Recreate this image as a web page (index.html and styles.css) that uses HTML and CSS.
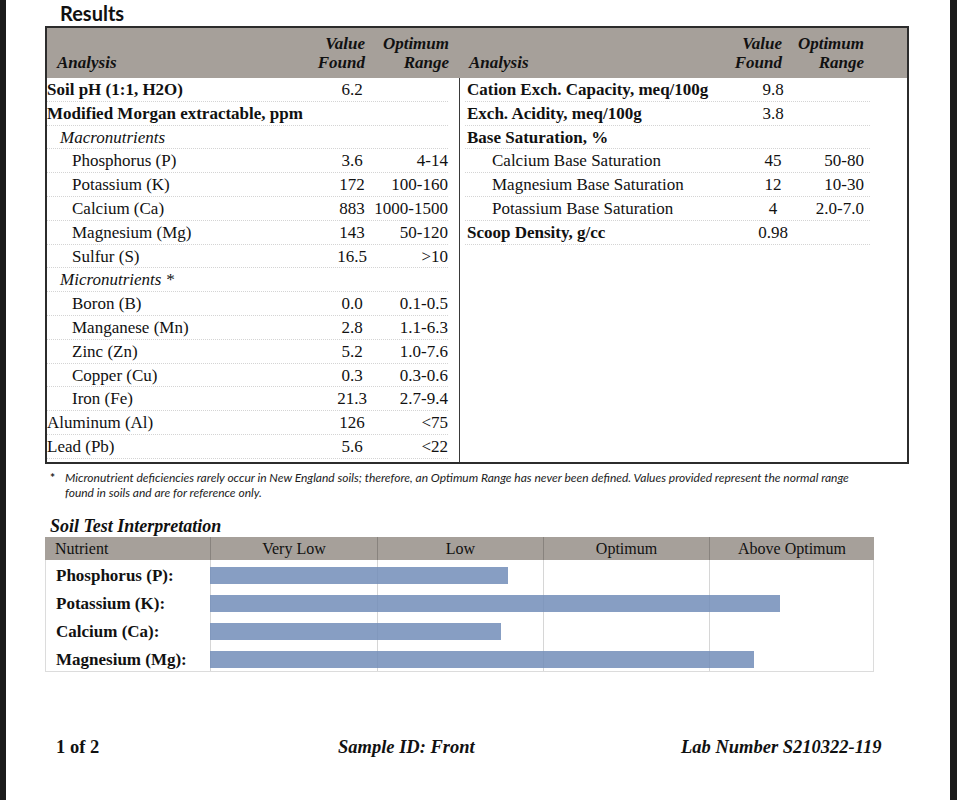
FILE: index.html
```html
<!DOCTYPE html>
<html lang="en">
<head>
<meta charset="utf-8">
<title>Results</title>
<link rel="stylesheet" href="styles.css">
</head>
<body>
<div class="page">
  <h1 class="title">Results</h1>

  <section class="results">
    <div class="half half-left">
      <div class="head">
        <span class="c-name">Analysis</span>
        <span class="c-val">Value<br>Found</span>
        <span class="c-rng">Optimum<br>Range</span>
      </div>
      <div class="body">
        <div class="row"><span class="c-name strong">Soil pH (1:1, H2O)</span><span class="c-val">6.2</span><span class="c-rng"></span></div>
        <div class="row"><span class="c-name strong">Modified Morgan extractable, ppm</span><span class="c-val"></span><span class="c-rng"></span></div>
        <div class="row"><span class="c-name group">Macronutrients</span><span class="c-val"></span><span class="c-rng"></span></div>
        <div class="row"><span class="c-name sub">Phosphorus (P)</span><span class="c-val">3.6</span><span class="c-rng">4-14</span></div>
        <div class="row"><span class="c-name sub">Potassium (K)</span><span class="c-val">172</span><span class="c-rng">100-160</span></div>
        <div class="row"><span class="c-name sub">Calcium (Ca)</span><span class="c-val">883</span><span class="c-rng">1000-1500</span></div>
        <div class="row"><span class="c-name sub">Magnesium (Mg)</span><span class="c-val">143</span><span class="c-rng">50-120</span></div>
        <div class="row"><span class="c-name sub">Sulfur (S)</span><span class="c-val">16.5</span><span class="c-rng">&gt;10</span></div>
        <div class="row"><span class="c-name group">Micronutrients *</span><span class="c-val"></span><span class="c-rng"></span></div>
        <div class="row"><span class="c-name sub">Boron (B)</span><span class="c-val">0.0</span><span class="c-rng">0.1-0.5</span></div>
        <div class="row"><span class="c-name sub">Manganese (Mn)</span><span class="c-val">2.8</span><span class="c-rng">1.1-6.3</span></div>
        <div class="row"><span class="c-name sub">Zinc (Zn)</span><span class="c-val">5.2</span><span class="c-rng">1.0-7.6</span></div>
        <div class="row"><span class="c-name sub">Copper (Cu)</span><span class="c-val">0.3</span><span class="c-rng">0.3-0.6</span></div>
        <div class="row"><span class="c-name sub">Iron (Fe)</span><span class="c-val">21.3</span><span class="c-rng">2.7-9.4</span></div>
        <div class="row"><span class="c-name">Aluminum (Al)</span><span class="c-val">126</span><span class="c-rng">&lt;75</span></div>
        <div class="row"><span class="c-name">Lead (Pb)</span><span class="c-val">5.6</span><span class="c-rng">&lt;22</span></div>
      </div>
    </div>

    <div class="half half-right">
      <div class="head">
        <span class="c-name">Analysis</span>
        <span class="c-val">Value<br>Found</span>
        <span class="c-rng">Optimum<br>Range</span>
      </div>
      <div class="body">
        <div class="row"><span class="c-name strong">Cation Exch. Capacity, meq/100g</span><span class="c-val">9.8</span><span class="c-rng"></span></div>
        <div class="row"><span class="c-name strong">Exch. Acidity, meq/100g</span><span class="c-val">3.8</span><span class="c-rng"></span></div>
        <div class="row"><span class="c-name strong">Base Saturation, %</span><span class="c-val"></span><span class="c-rng"></span></div>
        <div class="row"><span class="c-name sub">Calcium Base Saturation</span><span class="c-val">45</span><span class="c-rng">50-80</span></div>
        <div class="row"><span class="c-name sub">Magnesium Base Saturation</span><span class="c-val">12</span><span class="c-rng">10-30</span></div>
        <div class="row"><span class="c-name sub">Potassium Base Saturation</span><span class="c-val">4</span><span class="c-rng">2.0-7.0</span></div>
        <div class="row"><span class="c-name strong">Scoop Density, g/cc</span><span class="c-val">0.98</span><span class="c-rng"></span></div>
      </div>
    </div>
  </section>

  <div class="footnote">
    <span class="star">*</span>
    <p class="note">Micronutrient deficiencies rarely occur in New England soils; therefore, an Optimum Range has never been defined. Values provided represent the normal range<br>found in soils and are for reference only.</p>
  </div>

  <h2 class="interp-title">Soil Test Interpretation</h2>
  <section class="interp">
    <div class="interp-head">
      <span class="ih-first">Nutrient</span>
      <span>Very Low</span>
      <span>Low</span>
      <span>Optimum</span>
      <span>Above Optimum</span>
    </div>
    <div class="interp-body">
      <span class="nutrient">Phosphorus (P):</span>
      <div class="track"><div class="bar" style="width:44.9%"></div></div>
      <span class="nutrient">Potassium (K):</span>
      <div class="track"><div class="bar" style="width:86%"></div></div>
      <span class="nutrient">Calcium (Ca):</span>
      <div class="track"><div class="bar" style="width:43.9%"></div></div>
      <span class="nutrient">Magnesium (Mg):</span>
      <div class="track"><div class="bar" style="width:82.1%"></div></div>
    </div>
  </section>

  <footer class="footer">
    <span class="pg">1 of 2</span>
    <span class="it">Sample ID: Front</span>
    <span class="it">Lab Number S210322-119</span>
  </footer>
</div>
</body>
</html>
```

FILE: styles.css
```css
html, body {
  margin: 0;
  padding: 0;
  background: #1a1a1a;
}

.page {
  width: 957px;
  height: 800px;
  box-sizing: border-box;
  border-left: 6px solid #1b1b1b;
  border-right: 7px solid #1b1b1b;
  background: #ffffff;
  overflow: hidden;
  font-family: "Liberation Serif", "Times New Roman", serif;
  color: #111;
}

.title {
  margin: 0;
  height: 26px;
  padding-left: 54px;
  font-family: Lato, "Liberation Sans", sans-serif;
  font-weight: 700;
  font-size: 20px;
  line-height: 26px;
  color: #111;
}

/* ---------- results table ---------- */
.results {
  display: flex;
  width: 864px;
  margin-left: 39px;
  box-sizing: border-box;
  border: 2px solid #2c2c2c;
  font-size: 17px;
}

.half {
  display: flex;
  flex-direction: column;
}

.half-left {
  width: 413px;
  flex: none;
}

.half-right {
  flex: 1;
}

.head {
  height: 50px;
  background: #a6a09a;
  display: grid;
  align-items: end;
  padding-bottom: 6px;
  box-sizing: border-box;
  font-weight: 700;
  font-style: italic;
  line-height: 19px;
  white-space: nowrap;
}

.head .c-val,
.head .c-rng {
  text-align: right;
}

.body {
  flex: 1;
  padding-bottom: 3px;
}

.half-left .body {
  border-right: 1px solid #3a3a3a;
}

.row {
  display: grid;
  height: 23.8px;
  line-height: 23.8px;
  border-bottom: 1px dotted #d4d4d4;
  box-sizing: border-box;
  white-space: nowrap;
}

.c-val {
  text-align: center;
}

.c-rng {
  text-align: right;
}

/* left half columns */
.half-left .row {
  grid-template-columns: 283px 44px 1fr;
  margin-right: 11px;
}

.half-left .head {
  grid-template-columns: 263px 64px 1fr;
  padding-right: 11px;
}

.half-left .head .c-name {
  padding-left: 10px;
}

.half-left .head .c-val {
  padding-right: 9px;
}

/* right half columns */
.half-right .row {
  grid-template-columns: 286px 44px 1fr;
  margin-left: 5px;
  margin-right: 37px;
}

.half-right .head {
  grid-template-columns: 266px 64px 1fr;
  padding-left: 5px;
  padding-right: 37px;
}

.half-right .head .c-name {
  padding-left: 4px;
}

.half-right .head .c-val {
  padding-right: 13px;
}

.half-right .c-rng {
  padding-right: 6px;
}

.half-right .row .c-name {
  padding-left: 2px;
}

.strong {
  font-weight: 700;
}

.group {
  font-style: italic;
  padding-left: 13px;
}

.half-left .sub {
  padding-left: 25px;
}

.half-right .row .sub {
  padding-left: 27px;
}

/* ---------- footnote ---------- */
.footnote {
  display: grid;
  grid-template-columns: 15px auto;
  margin: 6px 0 0 44px;
  font-family: Lato, "Liberation Sans", sans-serif;
  font-style: italic;
  font-size: 12px;
  line-height: 15px;
  color: #222;
}

.star {
  font-style: normal;
  font-weight: 700;
}

.note {
  margin: 0;
  white-space: nowrap;
}

/* ---------- interpretation ---------- */
.interp-title {
  margin: 16px 0 1px 44px;
  font-size: 18px;
  line-height: 20px;
  font-weight: 700;
  font-style: italic;
}

.interp {
  width: 829px;
  margin-left: 39px;
}

.interp-head {
  display: grid;
  grid-template-columns: 165px 167px 166px 166px 165px;
  height: 23px;
  background: #a6a09a;
  font-size: 16px;
  line-height: 23px;
  text-align: center;
}

.interp-head span + span {
  border-left: 1px solid rgba(0, 0, 0, 0.18);
}

.interp-head .ih-first {
  text-align: left;
  padding-left: 10px;
}

.interp-body {
  display: grid;
  grid-template-columns: 164px 1fr;
  row-gap: 11px;
  align-items: center;
  padding: 7px 0 3px;
  border: 1px solid #dcdcdc;
  border-top: none;
  background-image:
    linear-gradient(#d6d6d6, #d6d6d6),
    linear-gradient(#d6d6d6, #d6d6d6),
    linear-gradient(#d6d6d6, #d6d6d6),
    linear-gradient(#d6d6d6, #d6d6d6);
  background-size: 1px 100%;
  background-repeat: no-repeat;
  background-position: 164px 0, 331px 0, 497px 0, 663px 0;
}

.nutrient {
  padding-left: 10px;
  font-weight: 700;
  font-size: 17px;
  line-height: 17px;
  white-space: nowrap;
}

.track {
  height: 17px;
}

.bar {
  height: 17px;
  background: rgba(112, 140, 184, 0.84);
}

/* ---------- footer ---------- */
.footer {
  display: grid;
  grid-template-columns: 282px 343px auto;
  margin-top: 63px;
  padding-left: 50px;
  font-size: 18.5px;
  line-height: 24px;
  font-weight: 700;
}

.footer .it {
  font-style: italic;
}
```
